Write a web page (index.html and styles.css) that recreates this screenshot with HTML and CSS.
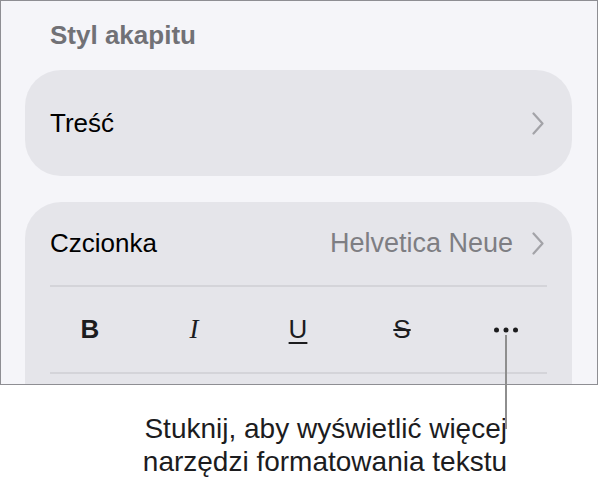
FILE: index.html
```html
<!DOCTYPE html>
<html lang="pl">
<head>
  <meta charset="UTF-8" />
  <meta name="viewport" content="width=device-width, initial-scale=1.0" />
  <title>Styl akapitu</title>
  <link rel="stylesheet" href="styles.css">
</head>
<body>
  <div class="figure">
    <div class="screen">
      <h2 class="section-title">Styl akapitu</h2>

      <div class="card">
        <div class="row row-tall">
          <span class="label">Treść</span>
          <svg class="chevron" viewBox="0 0 12 23"><path d="M1.5 1.5 L10.5 11.5 L1.5 21.5" /></svg>
        </div>
      </div>

      <div class="card card-font">
        <div class="row">
          <span class="label">Czcionka</span>
          <span class="value">Helvetica Neue</span>
          <svg class="chevron" viewBox="0 0 12 23"><path d="M1.5 1.5 L10.5 11.5 L1.5 21.5" /></svg>
        </div>
        <div class="divider"></div>
        <div class="tools">
          <span class="tool tool-b">B</span>
          <span class="tool tool-i">I</span>
          <span class="tool tool-u">U</span>
          <span class="tool tool-s">S</span>
          <span class="tool tool-more">
            <svg viewBox="0 0 26 6" width="26" height="6">
              <circle cx="3.5" cy="3" r="2.5" />
              <circle cx="13" cy="3" r="2.5" />
              <circle cx="22.5" cy="3" r="2.5" />
            </svg>
          </span>
        </div>
        <div class="divider"></div>
      </div>
    </div>

    <div class="callout-line"></div>
    <p class="caption">Stuknij, aby wyświetlić więcej<br>narzędzi formatowania tekstu</p>
  </div>
</body>
</html>
```

FILE: styles.css
```css
body {
  margin: 0;
  background: #ffffff;
  font-family: "Liberation Sans", Arial, sans-serif;
  color: #000000;
}
.figure {
  position: relative;
  width: 599px;
  height: 481px;
}
.screen {
  width: 598px;
  height: 385px;
  box-sizing: border-box;
  border: 1px solid #8e8e93;
  background: #f5f5f9;
  overflow: hidden;
  padding: 19px 25px 0 24px;
}
.section-title {
  margin: 0 0 20px 25px;
  font-size: 26px;
  line-height: 30px;
  font-weight: 700;
  color: #717176;
}
.card {
  background: #e5e5ea;
  border-radius: 36px;
  padding: 0 25px;
}
.card-font {
  margin-top: 26px;
  height: 260px;
}
.row {
  display: flex;
  align-items: center;
  height: 83px;
  font-size: 26px;
}
.row-tall {
  height: 106px;
}
.label {
  flex: 1;
}
.value {
  color: #7e7e83;
  font-size: 27px;
  margin-right: 19px;
}
.chevron {
  width: 12px;
  height: 23px;
  fill: none;
  stroke: #a3a3a8;
  stroke-width: 2.2;
  stroke-linecap: round;
  stroke-linejoin: round;
  margin-right: 3px;
}
.divider {
  height: 2px;
  background: #d4d4d9;
}
.tools {
  display: flex;
  align-items: center;
  height: 85px;
  margin-left: -12px;
}
.tool {
  flex-shrink: 0;
  width: 104px;
  text-align: center;
  font-size: 26px;
  color: #1c1c1e;
}
.tool-b {
  font-weight: 700;
}
.tool-i {
  font-family: "Liberation Serif", "Times New Roman", serif;
  font-style: italic;
  font-size: 27px;
}
.tool-u {
  text-decoration: underline;
  text-decoration-thickness: 2px;
  text-underline-offset: 4px;
}
.tool-s {
  text-decoration: line-through;
  text-decoration-thickness: 2px;
}
.tool-more {
  display: flex;
  justify-content: center;
}
.tool-more svg {
  fill: #1c1c1e;
}
.callout-line {
  position: absolute;
  left: 505px;
  top: 335px;
  width: 2px;
  height: 94px;
  background: #8e8e8e;
}
.caption {
  margin: 27px 92px 0 0;
  text-align: right;
  font-size: 28px;
  line-height: 33px;
  color: #1c1c1e;
}
```
